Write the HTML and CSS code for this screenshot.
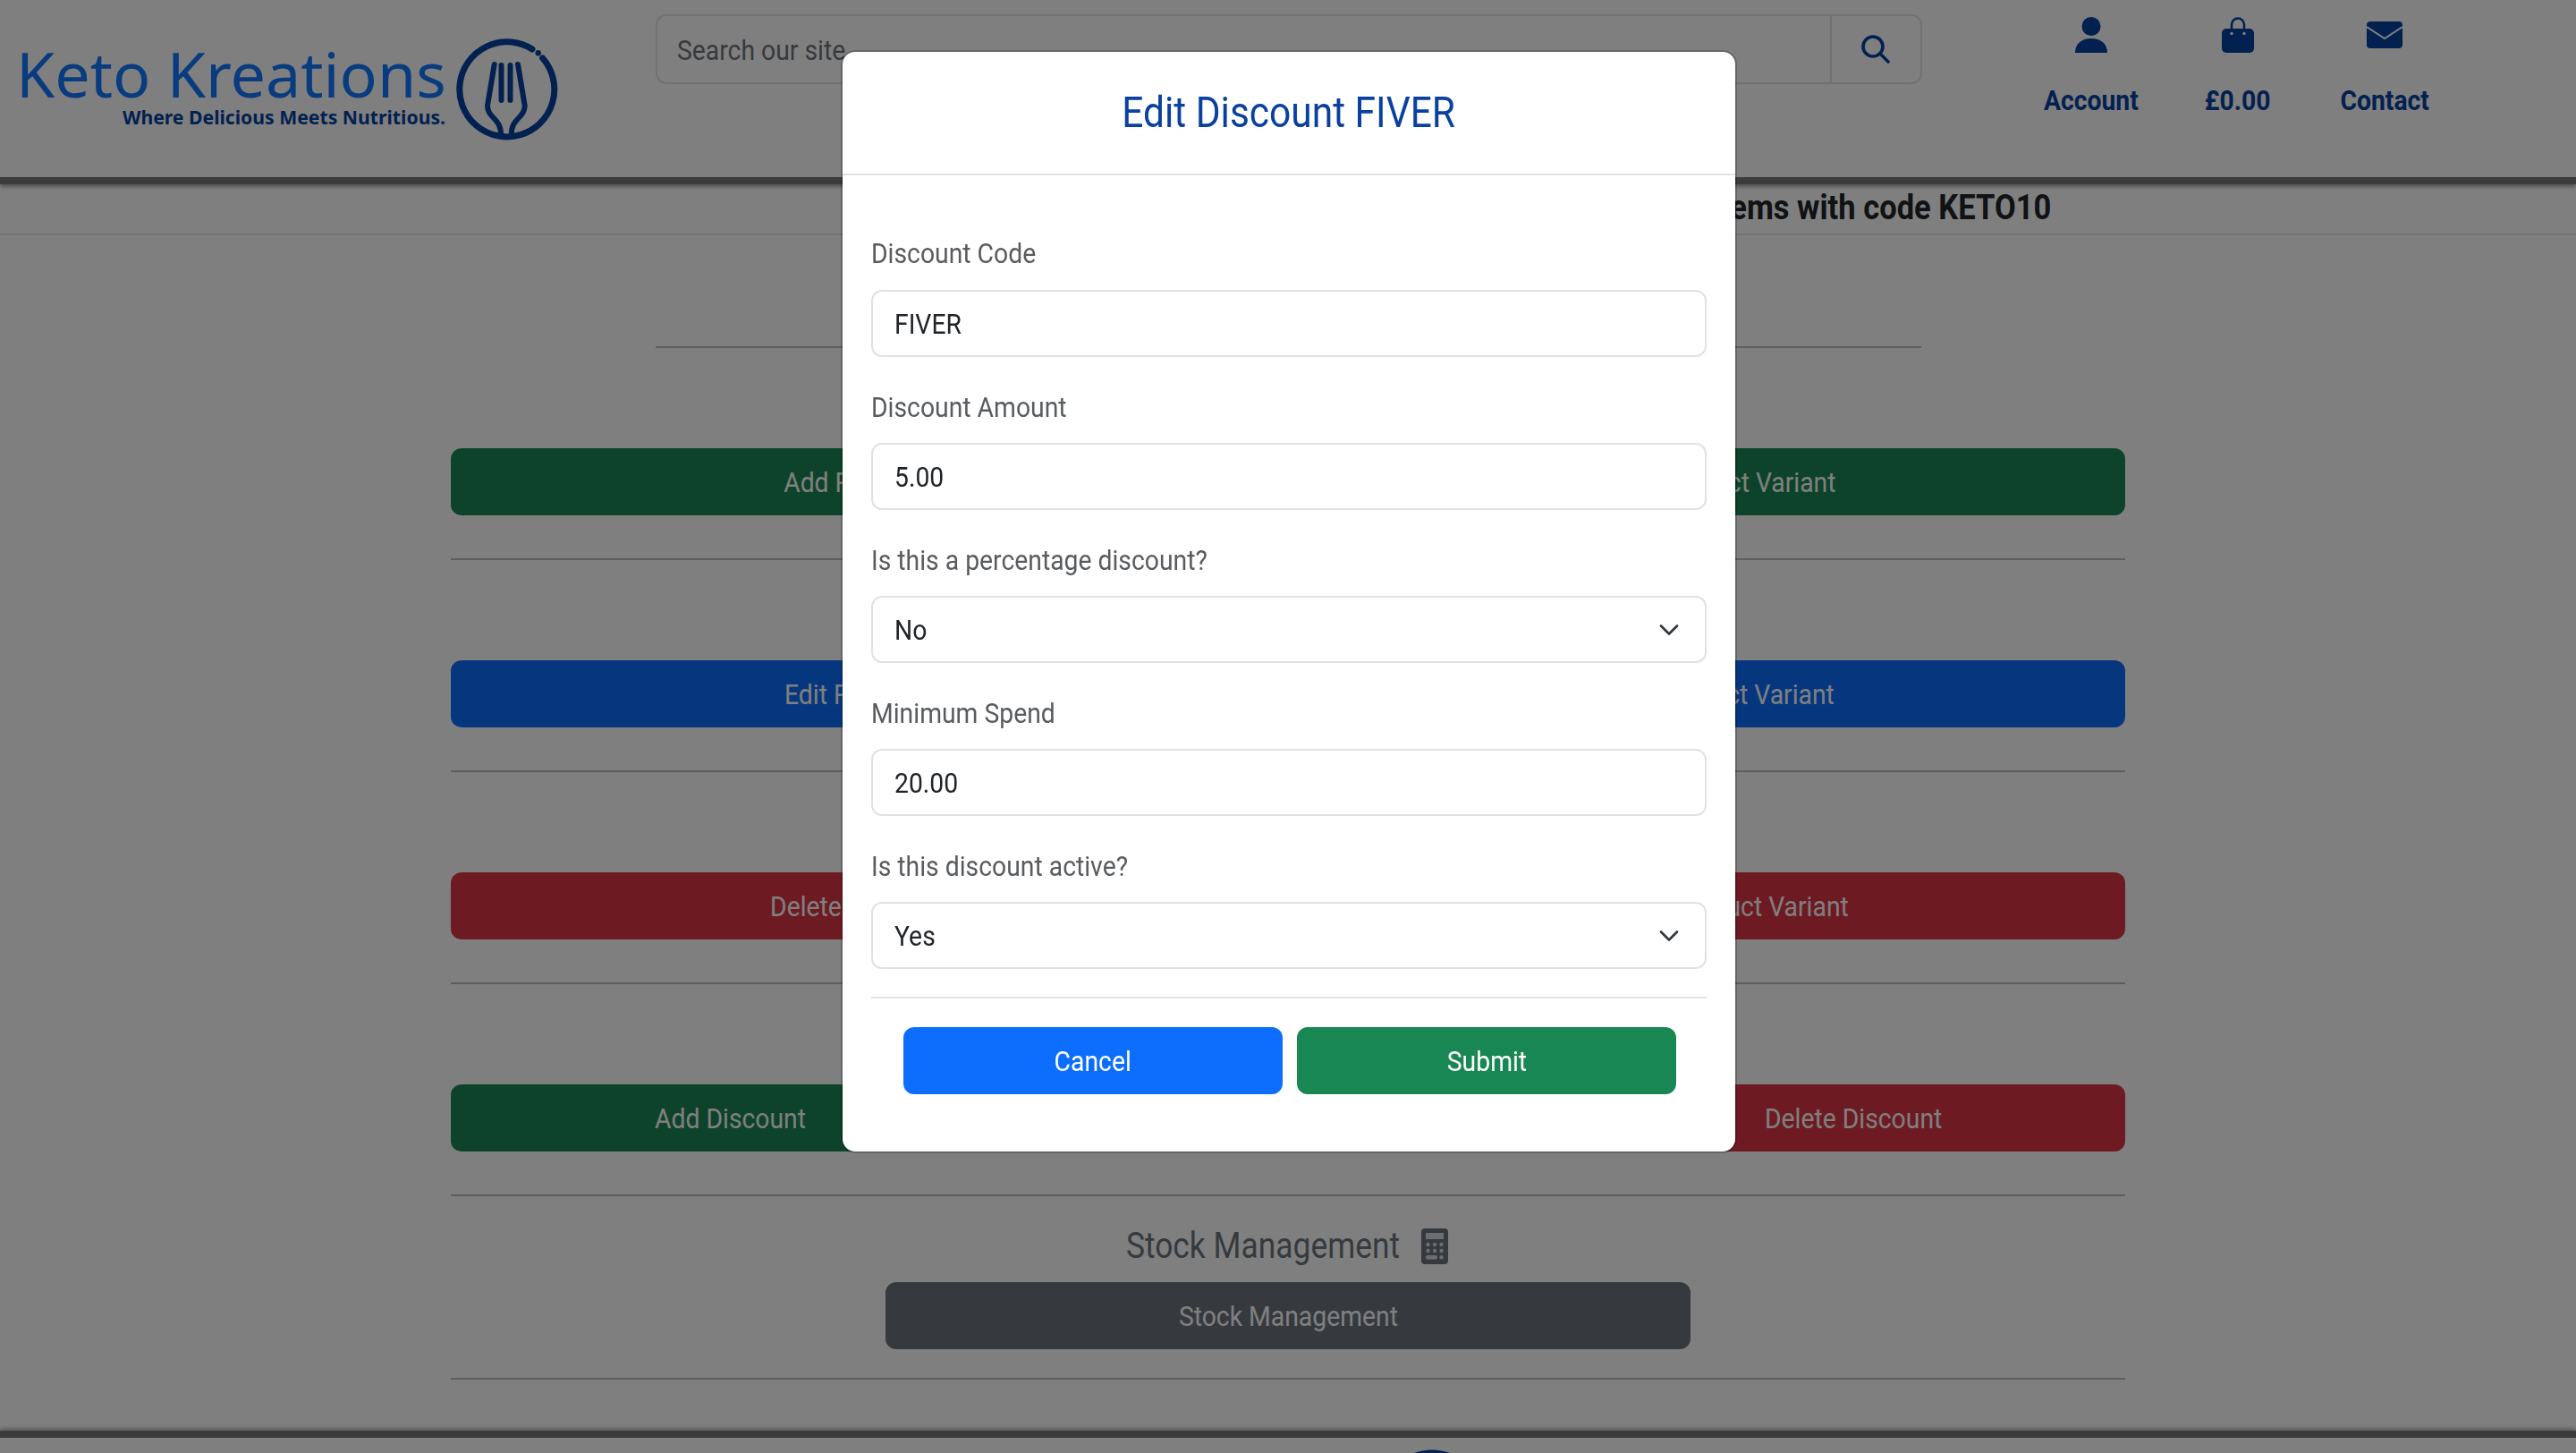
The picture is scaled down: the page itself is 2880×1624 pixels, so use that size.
FILE: index.html

```html
<!DOCTYPE html>
<html lang="en">

<head>
    <meta charset="UTF-8">
    <title>Edit Discount</title>
    <link rel="stylesheet" href="styles.css">
</head>

<body>
    <header class="site_head">
        <a class="logo" href="#">
            <div class="logo_text">
                <div class="logo_name">Keto Kreations</div>
                <div class="logo_tag">Where Delicious Meets Nutritious.</div>
            </div>
            <svg class="logo_mark" viewBox="0 0 120 120" fill="none" stroke="#0442a0" stroke-linecap="round">
                <path d="M90 15A53 53 0 1 0 101.7 25" stroke-width="7" />
                <circle cx="96.7" cy="19.3" r="3.2" fill="#0442a0" stroke="none" />
                <path d="M47.7 32L40 78C40 92 55 92 55 110" stroke-width="6" />
                <path d="M74 32L81.7 78C81.7 92 66.7 92 66.7 110" stroke-width="6" />
                <path d="M55.5 33V72M65.5 33V72" stroke-width="6" />
            </svg>
        </a>
        <form class="search">
            <div class="search_input"><span class="tx tx_left">Search our site</span></div>
            <div class="search_btn">
                <svg viewBox="0 0 32 32" width="32" height="32" fill="none" stroke="#0442a0" stroke-width="3.6" stroke-linecap="round">
                    <circle cx="13" cy="13" r="11" />
                    <path d="M21 21L30 30" />
                </svg>
            </div>
        </form>
        <nav class="nav">
            <a class="nav_item" href="#">
                <svg viewBox="0 0 40 40" width="40" height="40" fill="#0442a0">
                    <circle cx="20" cy="10.5" r="10.5" />
                    <path d="M2 40C2 30 9 24 20 24S38 30 38 40Z" />
                </svg>
                <span class="tx">Account</span>
            </a>
            <a class="nav_item" href="#">
                <svg viewBox="0 0 40 40" width="40" height="40">
                    <path d="M13 15V8.500A7 7 0 0 1 27 8.500V15" fill="none" stroke="#0442a0" stroke-width="2.600" />
                    <rect x="2" y="13" width="36" height="27" rx="5" fill="#0442a0" />
                    <circle cx="13" cy="18.500" r="1.700" fill="#fff" />
                    <circle cx="27" cy="18.500" r="1.700" fill="#fff" />
                </svg>
                <span class="tx">£0.00</span>
            </a>
            <a class="nav_item" href="#">
                <svg viewBox="0 0 40 40" width="40" height="40">
                    <rect x="0" y="5" width="40" height="30" rx="4" fill="#0442a0" />
                    <path d="M0 11L20 24L40 11" fill="none" stroke="#fff" stroke-width="2" />
                </svg>
                <span class="tx">Contact</span>
            </a>
        </nav>
    </header>

    <div class="promo"><span class="tx tx_right">10% off all items with code KETO10</span></div>

    <div class="search_rule"></div>

    <main class="admin">
        <section class="admin_row">
            <h2 class="admin_title"><span class="tx">Products</span></h2>
            <div class="btn_pair">
                <a class="btn btn_green" href="#"><span class="tx">Add Product</span></a>
                <a class="btn btn_green" href="#"><span class="tx">Add Product Variant</span></a>
            </div>
        </section>
        <section class="admin_row">
            <h2 class="admin_title"><span class="tx">Edit Products</span></h2>
            <div class="btn_pair">
                <a class="btn btn_blue" href="#"><span class="tx">Edit Product</span></a>
                <a class="btn btn_blue" href="#"><span class="tx">Edit Product Variant</span></a>
            </div>
        </section>
        <section class="admin_row">
            <h2 class="admin_title"><span class="tx">Delete Products</span></h2>
            <div class="btn_pair">
                <a class="btn btn_red" href="#"><span class="tx">Delete Product</span></a>
                <a class="btn btn_red" href="#"><span class="tx">Delete Product Variant</span></a>
            </div>
        </section>
        <section class="admin_row">
            <h2 class="admin_title"><span class="tx">Discounts</span></h2>
            <div class="btn_three">
                <a class="btn btn_green" href="#"><span class="tx">Add Discount</span></a>
                <a class="btn btn_blue" href="#"><span class="tx">Edit Discount</span></a>
                <a class="btn btn_red" href="#"><span class="tx">Delete Discount</span></a>
            </div>
        </section>
        <section class="admin_row stock_row">
            <h2 class="stock_title">
                <span class="tx">Stock Management</span>
                <svg viewBox="0 0 30 40" width="30" height="40">
                    <rect width="30" height="40" rx="4" fill="#6c757d" />
                    <rect x="5" y="5" width="20" height="7" rx="1" fill="#fff" opacity="0.75" />
                    <circle cx="7.500" cy="18" r="2.200" fill="#fff" opacity="0.75" />
                    <circle cx="15" cy="18" r="2.200" fill="#fff" opacity="0.75" />
                    <circle cx="22.500" cy="18" r="2.200" fill="#fff" opacity="0.75" />
                    <circle cx="7.500" cy="25" r="2.200" fill="#fff" opacity="0.75" />
                    <circle cx="15" cy="25" r="2.200" fill="#fff" opacity="0.75" />
                    <circle cx="22.500" cy="25" r="2.200" fill="#fff" opacity="0.75" />
                    <rect x="5" y="30" width="13" height="4.400" rx="2" fill="#fff" opacity="0.75" />
                    <circle cx="22.500" cy="32.200" r="2.200" fill="#fff" opacity="0.75" />
                </svg>
            </h2>
            <a class="btn btn_grey" href="#"><span class="tx">Stock Management</span></a>
        </section>
    </main>

    <footer class="site_foot">
        <svg class="foot_mark" viewBox="0 0 120 120" fill="none" stroke="#0442a0">
            <circle cx="60" cy="60" r="53" stroke-width="7" />
        </svg>
    </footer>

    <div class="overlay">
        <div class="modal">
            <div class="modal_head"><span class="tx">Edit Discount FIVER</span></div>
            <form class="modal_body">
                <div class="field">
                    <label class="field_label"><span class="tx tx_left">Discount Code</span></label>
                    <div class="field_input"><span class="tx tx_left">FIVER</span></div>
                </div>
                <div class="field">
                    <label class="field_label"><span class="tx tx_left">Discount Amount</span></label>
                    <div class="field_input"><span class="tx tx_left">5.00</span></div>
                </div>
                <div class="field">
                    <label class="field_label"><span class="tx tx_left">Is this a percentage discount?</span></label>
                    <div class="field_input">
                        <span class="tx tx_left">No</span>
                        <svg class="chevron" viewBox="0 0 22 14" width="22" height="14" fill="none" stroke="#343a40" stroke-width="2.800" stroke-linecap="round" stroke-linejoin="round">
                            <path d="M2 2.500L11 11.500L20 2.500" />
                        </svg>
                    </div>
                </div>
                <div class="field">
                    <label class="field_label"><span class="tx tx_left">Minimum Spend</span></label>
                    <div class="field_input"><span class="tx tx_left">20.00</span></div>
                </div>
                <div class="field">
                    <label class="field_label"><span class="tx tx_left">Is this discount active?</span></label>
                    <div class="field_input">
                        <span class="tx tx_left">Yes</span>
                        <svg class="chevron" viewBox="0 0 22 14" width="22" height="14" fill="none" stroke="#343a40" stroke-width="2.800" stroke-linecap="round" stroke-linejoin="round">
                            <path d="M2 2.500L11 11.500L20 2.500" />
                        </svg>
                    </div>
                </div>
                <div class="modal_foot">
                    <a class="btn btn_cancel" href="#"><span class="tx">Cancel</span></a>
                    <a class="btn btn_submit" href="#"><span class="tx">Submit</span></a>
                </div>
            </form>
        </div>
    </div>
</body>

</html>
```

FILE: styles.css

```css
* {
    box-sizing: border-box;
}

html,
body {
    margin: 0;
    height: 1624px;
    overflow: hidden;
}

body {
    background: #fff;
    color: #212529;
    font-family: Roboto, "Liberation Sans", sans-serif;
    font-size: 32px;
    line-height: 48px;
}

a {
    text-decoration: none;
    color: inherit;
}

/* the site's text runs narrower than plain Roboto */
.tx {
    display: inline-block;
    white-space: nowrap;
    transform: scaleX(0.885);
}

.tx_left {
    transform-origin: 0 50%;
}

.tx_right {
    transform-origin: 100% 50%;
}

/* header */
.site_head {
    height: 206px;
    display: flex;
    align-items: flex-start;
    border-bottom: 8px solid #777;
    box-shadow: 0 3px 4px rgba(0, 0, 0, 0.35);
    position: relative;
}

.logo {
    width: 733px;
    padding: 40px 0 0 18px;
    display: flex;
    align-items: flex-start;
}

.logo_text {
    width: 480px;
    text-align: right;
    color: #1278ff;
}

.logo_name {
    font-family: "Noto Sans", sans-serif;
    font-size: 70px;
    line-height: 70px;
    margin-top: 7px;
    white-space: nowrap;
}

.logo_tag {
    font-family: "Noto Sans", sans-serif;
    font-weight: 700;
    font-size: 21.2px;
    line-height: 26px;
    margin-top: 1px;
    color: #0442a0;
    white-space: nowrap;
}

.logo_mark {
    width: 120px;
    height: 120px;
    margin: 0 0 0 7px;
}

.search {
    width: 1416px;
    height: 78px;
    margin-top: 16px;
    border: 2px solid #dee2e6;
    border-radius: 12px;
    display: flex;
}

.search_input {
    flex: 1;
    padding: 14px 22px 0;
    color: #6c757d;
}

.search_btn {
    width: 101px;
    border-left: 2px solid #dee2e6;
    padding-right: 2px;
    display: flex;
    align-items: center;
    justify-content: center;
}

.nav {
    display: flex;
    margin-left: auto;
    margin-right: 132px;
    padding-top: 19px;
}

.nav_item {
    width: 164px;
    display: flex;
    flex-direction: column;
    align-items: center;
    color: #0442a0;
    font-weight: 700;
    font-size: 32px;
}

.nav_item span {
    margin-top: 29px;
}

/* promo strip */
.promo {
    height: 57px;
    padding-right: 587px;
    text-align: right;
    font-size: 39px;
    font-weight: 700;
    line-height: 53px;
    border-bottom: 2px solid #dee2e6;
}

.search_rule {
    height: 2px;
    width: 1415px;
    margin: 124px 0 0 733px;
    background: #bbb;
}

/* admin buttons */
.admin {
    width: 1872px;
    margin: 0 auto;
}

.admin_row {
    padding-top: 36px;
    padding-bottom: 48px;
    border-bottom: 2px solid #bbb;
}

.admin_title,
.stock_title {
    margin: 0;
    height: 76px;
    font-size: 40px;
    font-weight: 400;
    line-height: 48px;
    text-align: center;
    color: #6c757d;
}

.stock_row {
    padding-top: 23px;
    padding-bottom: 32px;
}

.stock_title {
    height: 73px;
    padding-top: 9px;
    display: flex;
    align-items: flex-start;
    justify-content: center;
    gap: 26px;
}

.stock_title .tx {
    margin: 0 -22px;
}

.stock_title svg {
    margin-top: 4px;
}

.btn {
    height: 75px;
    border-radius: 12px;
    display: flex;
    align-items: center;
    justify-content: center;
    color: #fff;
}

.btn_green {
    background: #198754;
}

.btn_blue {
    background: #0d6efd;
}

.btn_red {
    background: #dc3545;
}

.btn_grey {
    width: 900px;
    margin: 0 auto;
    background: #6c757d;
}

.btn_pair {
    display: grid;
    grid-template-columns: 1fr 1fr;
    gap: 72px;
}

.btn_three {
    display: grid;
    grid-template-columns: 624px 1fr 608px;
    gap: 16px;
}

.site_foot {
    margin-top: 57px;
    height: 27px;
    border-top: 8px solid #777;
    box-shadow: 0 -3px 4px rgba(0, 0, 0, 0.25);
    display: flex;
    justify-content: center;
    padding-left: 322px;
    overflow: hidden;
}

.foot_mark {
    width: 120px;
    height: 120px;
    margin-top: 10px;
    flex: none;
}

/* modal */
.overlay {
    position: fixed;
    inset: 0;
    background: rgba(0, 0, 0, 0.5);
    display: flex;
    justify-content: center;
    align-items: flex-start;
    padding: 56px 0 0 2px;
}

.modal {
    width: 1002px;
    background: #fff;
    border: 2px solid rgba(0, 0, 0, 0.2);
    border-radius: 16px;
    background-clip: padding-box;
}

.modal_head {
    height: 138px;
    border-bottom: 2px solid #dee2e6;
    text-align: center;
    font-size: 48px;
    line-height: 136px;
    color: #0a41a0;
}

.modal_body {
    padding: 63px 32px 64px;
}

.field {
    margin-bottom: 32px;
}

.field:first-child .field_label {
    margin-bottom: 17px;
}

.field:nth-child(5) {
    margin-bottom: 31px;
}

.field_label {
    display: block;
    margin-bottom: 16px;
    color: #595c5f;
}

.field_input {
    height: 75px;
    border: 2px solid #dee2e6;
    border-radius: 12px;
    padding: 0 24px;
    display: flex;
    align-items: center;
    justify-content: space-between;
    line-height: 48px;
}

.chevron {
    margin-right: 5px;
}

.modal_foot {
    border-top: 2px solid #dee2e6;
    padding: 32px 34px 0 36px;
    display: grid;
    grid-template-columns: 1fr 1fr;
    gap: 16px;
}

.btn_cancel {
    background: #0d6efd;
}

.btn_submit {
    background: #198754;
}
```
